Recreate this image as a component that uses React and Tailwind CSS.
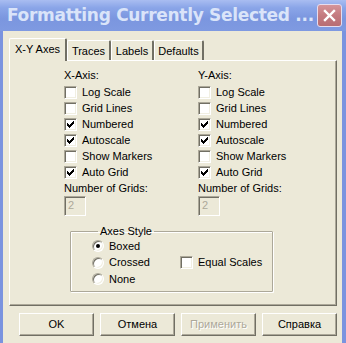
import React from 'react';

const CHECK_PIXELS = [
    [6, 0], [5, 1], [6, 1], [0, 2], [4, 2], [5, 2], [6, 2],
    [0, 3], [1, 3], [3, 3], [4, 3], [5, 3],
    [0, 4], [1, 4], [2, 4], [3, 4], [4, 4],
    [1, 5], [2, 5], [3, 5], [2, 6],
];

const CheckBox = ({ checked, label }) => (
    <div className="flex items-center h-[16px]">
        <span className="relative w-[13px] h-[13px] shrink-0 bg-white border border-t-[#aca899] border-l-[#aca899] border-r-white border-b-white shadow-[inset_1px_1px_0_#716f64,inset_-1px_-1px_0_#f1efe2]">
            {checked && (
                <svg className="absolute left-[2px] top-[2px]" width="7" height="7" shapeRendering="crispEdges">
                    {CHECK_PIXELS.map(([x, y]) => (
                        <rect key={`${x}-${y}`} x={x} y={y} width="1" height="1" fill="#000" />
                    ))}
                </svg>
            )}
        </span>
        <span className="ml-[5px] leading-[13px]">{label}</span>
    </div>
);

const Radio = ({ checked, label }) => (
    <div className="flex items-center h-[16px]">
        <span className="relative w-[12px] h-[12px] shrink-0 rounded-full bg-white border border-t-[#aca899] border-l-[#aca899] border-r-white border-b-white shadow-[inset_1px_1px_0_#716f64,inset_-1px_-1px_0_#f1efe2]">
            {checked && (
                <span className="absolute left-[3px] top-[3px] w-[4px] h-[4px] rounded-full bg-black" />
            )}
        </span>
        <span className="ml-[5px] leading-[13px]">{label}</span>
    </div>
);

const AxisColumn = ({ title, className }) => (
    <div className={className}>
        <div className="h-[14px] leading-[13px]">{title}</div>
        <div className="pt-[1px]">
            <CheckBox label="Log Scale" />
            <CheckBox label="Grid Lines" />
            <CheckBox checked label="Numbered" />
            <CheckBox checked label="Autoscale" />
            <CheckBox label="Show Markers" />
            <CheckBox checked label="Auto Grid" />
        </div>
        <div className="mt-[2px] h-[13px] leading-[13px]">Number of Grids:</div>
        <div className="mt-[1px] w-[22px] h-[20px] border border-t-[#aca899] border-l-[#aca899] border-r-white border-b-white shadow-[inset_1px_1px_0_#716f64] pl-[3px] pt-[2px] leading-[13px] text-[#aca899]">
            2
        </div>
    </div>
);

const Tab = ({ children, active, className = '' }) => (
    <div
        className={`flex items-center justify-center border-t border-l border-white border-r-2 border-r-[#716f64] rounded-t-[2px] ${active ? 'h-[23px] relative z-10 -mb-[1px] bg-[#ece9d8] pb-[2px]' : 'h-[20px] pt-[1px]'} ${className}`}
    >
        {children}
    </div>
);

const Button = ({ children, disabled }) => (
    <div className="w-[75px] h-[23px] flex items-center justify-center border border-t-white border-l-white border-r-[#716f64] border-b-[#716f64] shadow-[inset_-1px_-1px_0_#aca899]">
        <span className={disabled ? 'text-[#aca899] [text-shadow:1px_1px_0_#fff]' : ''}>{children}</span>
    </div>
);

export default function App() {
    return (
        <div className="w-[346px] h-[343px] flex flex-col bg-[#7a93df] overflow-hidden text-[11px] text-black" style={{ fontFamily: '"Liberation Sans", Arial, sans-serif' }}>
            {/* Title bar (inactive XP caption) */}
            <div className="h-[31px] shrink-0 flex items-center pl-[7px] pr-[4px] bg-[linear-gradient(to_bottom,#a9bdf1_0%,#8aa5e8_25%,#7b96df_60%,#7f9ae1_100%)]">
                <span className="flex-1 text-[17px] font-bold text-[#dae4f9] tracking-[-0.3px] whitespace-nowrap" style={{ fontFamily: '"DejaVu Sans", "Liberation Sans", sans-serif' }}>
                    Formatting Currently Selected ...
                </span>
                <div className="w-[25px] h-[23px] rounded-[3px] border border-[#e6dcee] bg-[linear-gradient(to_bottom,#d59499,#c47b80_50%,#b86d73)] flex items-center justify-center">
                    <svg width="13" height="13" viewBox="0 0 13 13">
                        <path d="M2 2 L11 11 M11 2 L2 11" stroke="#fff" strokeWidth="2.4" strokeLinecap="square" />
                    </svg>
                </div>
            </div>

            <div className="flex-1 flex">
                <div className="w-[3px] shrink-0" />
                <div className="flex-1 bg-[#ece9d8] pl-[6px] pt-[7px]">
                    {/* Tabs */}
                    <div className="flex items-end h-[22px]">
                        <Tab active className="w-[58px]">X-Y Axes</Tab>
                        <Tab className="w-[44px]">Traces</Tab>
                        <Tab className="w-[43px]">Labels</Tab>
                        <Tab className="w-[50px]">Defaults</Tab>
                    </div>

                    {/* Tab panel */}
                    <div className="w-[328px] h-[246px] border border-t-white border-l-white border-r-[#716f64] border-b-[#716f64] shadow-[inset_-1px_-1px_0_#aca899] pt-[8px] pl-[54px]">
                        <div className="flex">
                            <AxisColumn title="X-Axis:" className="w-[134px]" />
                            <AxisColumn title="Y-Axis:" />
                        </div>

                        <fieldset className="ml-[6px] mt-[9px] w-[203px] h-[67px] border border-[#aca899] rounded-[1px] shadow-[1px_1px_0_#fff,inset_1px_1px_0_#fff] pl-[21px]">
                            <legend className="ml-[6px] px-[2px] leading-[13px]">Axes Style</legend>
                            <div className="flex">
                                <div className="w-[88px] flex flex-col gap-[0.5px]">
                                    <Radio checked label="Boxed" />
                                    <Radio label="Crossed" />
                                    <Radio label="None" />
                                </div>
                                <div className="pt-[16.5px]">
                                    <CheckBox label="Equal Scales" />
                                </div>
                            </div>
                        </fieldset>
                    </div>

                    {/* Dialog buttons */}
                    <div className="flex gap-[6px] pl-[10px] mt-[7px]">
                        <Button>OK</Button>
                        <Button>Отмена</Button>
                        <Button disabled>Применить</Button>
                        <Button>Справка</Button>
                    </div>
                </div>
                <div className="w-[4px] shrink-0" />
            </div>
        </div>
    );
}
